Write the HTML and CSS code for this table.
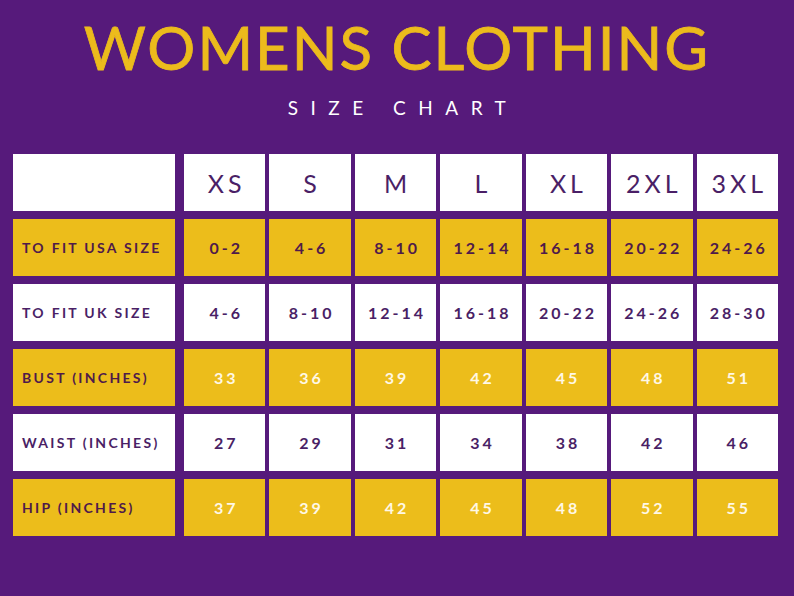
FILE: index.html
```html
<!DOCTYPE html>
<html>
<head>
<meta charset="utf-8">
<link rel="stylesheet" href="styles.css">
</head>
<body>
<div class="page">
  <h1 class="title">WOMENS CLOTHING</h1>
  <div class="subtitle">SIZE CHART</div>
  <div class="chart">
    <div class="cell label white"></div>
    <div class="cell head white">XS</div>
    <div class="cell head white">S</div>
    <div class="cell head white">M</div>
    <div class="cell head white">L</div>
    <div class="cell head white">XL</div>
    <div class="cell head white">2XL</div>
    <div class="cell head white">3XL</div>

    <div class="cell label gold">TO FIT USA SIZE</div>
    <div class="cell val gold">0-2</div>
    <div class="cell val gold">4-6</div>
    <div class="cell val gold">8-10</div>
    <div class="cell val gold">12-14</div>
    <div class="cell val gold">16-18</div>
    <div class="cell val gold">20-22</div>
    <div class="cell val gold">24-26</div>

    <div class="cell label white">TO FIT UK SIZE</div>
    <div class="cell val white">4-6</div>
    <div class="cell val white">8-10</div>
    <div class="cell val white">12-14</div>
    <div class="cell val white">16-18</div>
    <div class="cell val white">20-22</div>
    <div class="cell val white">24-26</div>
    <div class="cell val white">28-30</div>

    <div class="cell label gold">BUST (INCHES)</div>
    <div class="cell val gold light">33</div>
    <div class="cell val gold light">36</div>
    <div class="cell val gold light">39</div>
    <div class="cell val gold light">42</div>
    <div class="cell val gold light">45</div>
    <div class="cell val gold light">48</div>
    <div class="cell val gold light">51</div>

    <div class="cell label white">WAIST (INCHES)</div>
    <div class="cell val white">27</div>
    <div class="cell val white">29</div>
    <div class="cell val white">31</div>
    <div class="cell val white">34</div>
    <div class="cell val white">38</div>
    <div class="cell val white">42</div>
    <div class="cell val white">46</div>

    <div class="cell label gold">HIP (INCHES)</div>
    <div class="cell val gold light">37</div>
    <div class="cell val gold light">39</div>
    <div class="cell val gold light">42</div>
    <div class="cell val gold light">45</div>
    <div class="cell val gold light">48</div>
    <div class="cell val gold light">52</div>
    <div class="cell val gold light">55</div>
  </div>
</div>
</body>
</html>
```
FILE: styles.css
```css
html, body {
  margin: 0;
  padding: 0;
  background: #561a7b;
}
.page {
  width: 794px;
  height: 596px;
  background: #561a7b;
  font-family: Lato, "Open Sans", sans-serif;
  overflow: hidden;
}
.title {
  margin: 0;
  padding-top: 17px;
  text-align: center;
  font-size: 60px;
  line-height: 60px;
  font-weight: 400;
  letter-spacing: 2px;
  color: #ecbb1c;
  -webkit-text-stroke: 0.8px #ecbb1c;
}
.subtitle {
  margin-top: 21px;
  text-align: center;
  font-size: 19px;
  line-height: 19px;
  letter-spacing: 12.5px;
  padding-left: 12px;
  color: #ffffff;
}
.chart {
  margin: 37px 0 0 13px;
  width: 765px;
  display: grid;
  grid-template-columns: 167px repeat(7, 1fr);
  grid-auto-rows: 57px;
  column-gap: 4px;
  row-gap: 8px;
}
.cell {
  display: flex;
  align-items: center;
  justify-content: center;
}
.cell.label {
  margin-right: 5px;
  justify-content: flex-start;
  padding-left: 9px;
  font-size: 14px;
  font-weight: 700;
  letter-spacing: 2.3px;
}
.white { background: #ffffff; color: #4a1f66; }
.gold { background: #ecbd1b; color: #4f1a4a; }
.cell.head {
  font-size: 25px;
  letter-spacing: 4px;
  padding-left: 4px;
  color: #4a1f66;
}
.cell.val {
  font-size: 16px;
  font-weight: 700;
  letter-spacing: 3px;
  padding-left: 3px;
}
.cell.val.light { color: #fff8e6; }
```
